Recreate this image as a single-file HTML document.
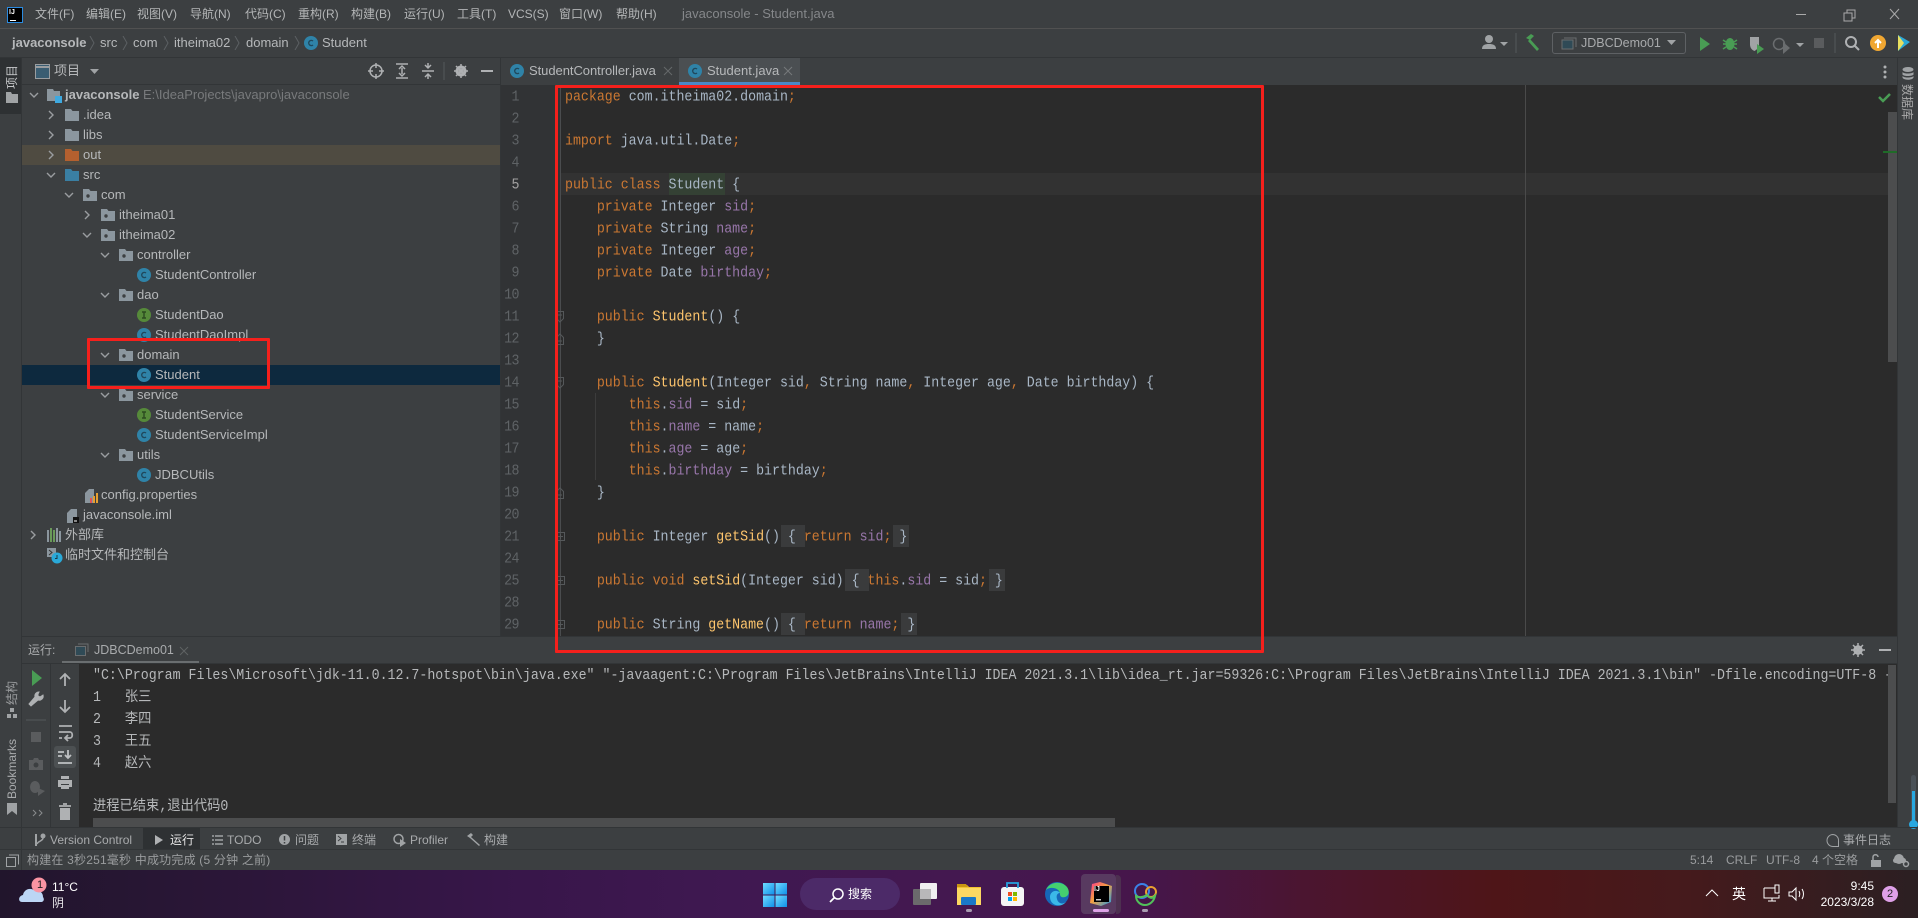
<!DOCTYPE html>
<html lang="zh"><head><meta charset="utf-8"><title>javaconsole - Student.java</title>
<style>
*{box-sizing:border-box}
html,body{margin:0;padding:0;width:1918px;height:918px;overflow:hidden;background:#3c3f41}
body{position:relative;font-family:"Liberation Sans","Noto Sans CJK SC",sans-serif;font-size:13px;color:#b6b8ba}
.a{position:absolute;white-space:nowrap}
.b{position:absolute}
.t{position:absolute;white-space:nowrap;line-height:20px;height:20px}
.i{position:absolute;overflow:visible}
.m{font-size:12px;line-height:16px;top:6px;color:#b4b6b7;position:absolute;white-space:nowrap}
.c{position:absolute;left:565px;height:22px;line-height:22px;font-family:"Liberation Mono","Noto Sans CJK SC",monospace;font-size:13.28px;color:#a9b7c6;white-space:pre;transform:scaleY(1.1)}
.n{position:absolute;left:500px;width:19px;text-align:right;height:22px;line-height:22px;font-family:"Liberation Mono",monospace;font-size:13.28px;color:#5f6366;letter-spacing:-.5px;transform:scaleY(1.1)}
.k{color:#cc7832}.f{color:#9876aa}.h{color:#ffc66d}
.g{position:absolute;height:22px;background:#3a3b3c}
.o{position:absolute;left:93px;height:22px;line-height:22px;font-family:"Liberation Mono","Noto Sans CJK SC",monospace;font-size:13.28px;color:#b6b8ba;white-space:pre;transform:scaleY(1.08)}
.v{position:absolute;writing-mode:vertical-rl;text-orientation:sideways;white-space:nowrap;font-size:12px;line-height:14px;color:#aaa}
.r{transform:rotate(180deg)}
.s{position:absolute;top:830px;line-height:20px;font-size:12px;color:#a9abad;white-space:nowrap}
.st{position:absolute;top:851px;line-height:18px;font-size:12px;color:#9a9c9e;white-space:nowrap}
</style></head><body>
<svg width="0" height="0" style="position:absolute">
<defs>
<symbol id="fo" viewBox="0 0 14 14"><path d="M0 1h6l1.5 2H14v10H0z" fill="#8b969e"/></symbol>
<symbol id="fp" viewBox="0 0 14 14"><path d="M0 1h6l1.5 2H14v10H0z" fill="#8b969e"/><circle cx="5" cy="8" r="1.7" fill="#3c3f41"/></symbol>
<symbol id="fr" viewBox="0 0 14 14"><path d="M0 1h6l1.5 2H14v10H0z" fill="#b4602f"/></symbol>
<symbol id="fs" viewBox="0 0 14 14"><path d="M0 1h6l1.5 2H14v10H0z" fill="#3a7fa3"/></symbol>
<symbol id="cc" viewBox="0 0 14 14"><circle cx="7" cy="7" r="7" fill="#2f83a8"/><path d="M9 5a2.6 2.6 0 1 0 0 4" fill="none" stroke="#20485c" stroke-width="1.4"/></symbol>
<symbol id="ci" viewBox="0 0 14 14"><circle cx="7" cy="7" r="7" fill="#568a3a"/><path d="M5 4h4M7 4v6M5 10h4" fill="none" stroke="#2c4a20" stroke-width="1.4"/></symbol>
<symbol id="dv" viewBox="0 0 10 10"><path d="M1 3l4 4 4-4" fill="none" stroke="#9a9da0" stroke-width="1.4"/></symbol>
<symbol id="dr" viewBox="0 0 10 10"><path d="M3 1l4 4-4 4" fill="none" stroke="#9a9da0" stroke-width="1.4"/></symbol>
<symbol id="ch" viewBox="0 0 6 14"><path d="M1 0l4 7-4 7" fill="none" stroke="#5c6063" stroke-width="1"/></symbol>
<symbol id="fm" viewBox="0 0 8 12"><path d="M.5.5h7v7L4 11 .5 7.500z" fill="none" stroke="#55585a"/><path d="M2 4h4" stroke="#55585a"/></symbol>
<symbol id="fu" viewBox="0 0 8 12"><path d="M.5 11.500h7v-7L4 1 .5 4.500z" fill="none" stroke="#55585a"/><path d="M2 8h4" stroke="#55585a"/></symbol>
<symbol id="fc" viewBox="0 0 9 9"><path d="M.5.5h8v8h-8z" fill="none" stroke="#55585a"/><path d="M2 4.500h5M4.500 2v5" stroke="#55585a"/></symbol>
</defs></svg>

<!-- title bar -->
<div class="b" style="left:0;top:28px;width:1918px;height:1px;background:#515151"></div>
<div class="b" style="left:7px;top:7px;width:16px;height:16px;background:#000;border:1px solid #2b8be0"></div>
<div class="a" style="left:9px;top:8px;font:bold 7px/9px 'Liberation Sans';color:#fff">IJ</div>
<div class="b" style="left:10px;top:20px;width:6px;height:1px;background:#fff"></div>
<span class="m" style="left:35px">文件(F)</span><span class="m" style="left:86px">编辑(E)</span><span class="m" style="left:137px">视图(V)</span><span class="m" style="left:190px">导航(N)</span><span class="m" style="left:245px">代码(C)</span><span class="m" style="left:298px">重构(R)</span><span class="m" style="left:351px">构建(B)</span><span class="m" style="left:404px">运行(U)</span><span class="m" style="left:457px">工具(T)</span><span class="m" style="left:508px">VCS(S)</span><span class="m" style="left:559px">窗口(W)</span><span class="m" style="left:616px">帮助(H)</span>
<span class="m" style="left:682px;font-size:13px;color:#85878a">javaconsole - Student.java</span>
<svg class="i" style="left:1790px;top:6px" width="115" height="18"><path d="M6 8.500h10" stroke="#aaa"/><path d="M54 7h8v8h-8zM57 7V4h8v8h-3" fill="none" stroke="#aaa"/><path d="M100 3l9 10M109 3l-9 10" stroke="#aaa"/></svg>

<!-- breadcrumbs -->
<div class="b" style="left:0;top:57px;width:1918px;height:1px;background:#323537"></div>
<div class="t" style="left:12px;top:33px;font-weight:bold">javaconsole</div>
<svg class="i" style="left:89px;top:36px" width="6" height="14"><use href="#ch"/></svg>
<div class="t" style="left:100px;top:33px">src</div>
<svg class="i" style="left:122px;top:36px" width="6" height="14"><use href="#ch"/></svg>
<div class="t" style="left:133px;top:33px">com</div>
<svg class="i" style="left:163px;top:36px" width="6" height="14"><use href="#ch"/></svg>
<div class="t" style="left:174px;top:33px">itheima02</div>
<svg class="i" style="left:234px;top:36px" width="6" height="14"><use href="#ch"/></svg>
<div class="t" style="left:246px;top:33px">domain</div>
<svg class="i" style="left:294px;top:36px" width="6" height="14"><use href="#ch"/></svg>
<svg class="i" style="left:304px;top:36px" width="14" height="14"><use href="#cc"/></svg>
<div class="t" style="left:322px;top:33px">Student</div>

<!-- main toolbar right -->
<svg class="i" style="left:1480px;top:33px" width="440" height="24">
<circle cx="9" cy="6" r="4" fill="#a0a3a5"/><path d="M2 16c0-4 3-5 7-5s7 1 7 5z" fill="#a0a3a5"/><path d="M20 9h8l-4 4z" fill="#a0a3a5"/>
<path d="M36 0v20" stroke="#55585a"/>
<path d="M46 5l5-4 3 2-4 4zM50 6l9 10-2 2-9-10z" fill="#499c54"/>
<path d="M220 4l10 7-10 7z" fill="#499c54"/>
<ellipse cx="250" cy="11" rx="4.500" ry="6" fill="#499c54"/><path d="M243 7l3 2M257 7l-3 2M243 11h3M254 11h3M243 16l3-2M257 16l-3-2" stroke="#499c54" stroke-width="1.500"/>
<path d="M270 4h9v8c-1 4-3 5-4.500 6-2-1-4-2-4.500-6z" fill="#a0a3a5"/><path d="M277 11l7 5-7 5z" fill="#499c54"/>
<circle cx="299" cy="11" r="5.500" fill="none" stroke="#6a6d6f" stroke-width="1.500"/><path d="M303 9l7 6-7 6z" fill="#6a6d6f"/>
<path d="M316 10h8l-4 4z" fill="#a0a3a5"/>
<rect x="334" y="5" width="10" height="10" fill="#5a5c5e"/>
<path d="M355 0v20" stroke="#55585a"/>
<circle cx="371" cy="9" r="5" fill="none" stroke="#afb1b3" stroke-width="2"/><path d="M375 13l4 4" stroke="#afb1b3" stroke-width="2"/>
<circle cx="398" cy="10" r="8" fill="#f0a732"/><path d="M398 15V7M395 10l3-3 3 3" stroke="#fff" stroke-width="2" fill="none"/>
<path d="M418 2l12 7-12 9z" fill="#2aa9d8"/><path d="M418 2l6 8-6 8z" fill="#e8e060"/>
</svg>
<div class="b" style="left:1552px;top:32px;width:134px;height:22px;border:1px solid #5e6164;border-radius:3px"></div>
<svg class="i" style="left:1561px;top:36px" width="16" height="14"><path d="M1 4h11v9H1z" fill="#2f4a56" stroke="#6a6d6f"/><path d="M3 2h12v9" fill="none" stroke="#6a6d6f"/></svg>
<div class="t" style="left:1581px;top:33px;font-size:12.500px;color:#a8aaac">JDBCDemo01</div>
<svg class="i" style="left:1667px;top:39px" width="10" height="8"><path d="M0 1h9L4.500 6z" fill="#a0a3a5"/></svg>

<!-- left stripe -->
<div class="b" style="left:0;top:58px;width:21px;height:56px;background:#2e3133"></div>
<div class="b" style="left:21px;top:58px;width:1px;height:812px;background:#323537"></div>
<div class="v r" style="left:5px;top:65px;color:#c4c6c8;font-size:12px">项目</div>
<svg class="i" style="left:6px;top:92px" width="12" height="11"><path d="M0 0h5l1 2h6v9H0z" fill="#a0a3a5"/></svg>

<!-- project header -->
<div class="b" style="left:22px;top:84px;width:478px;height:1px;background:#323537"></div>
<svg class="i" style="left:35px;top:64px" width="15" height="15"><rect x=".5" y=".5" width="14" height="14" fill="#3a5d72" stroke="#9a9da0"/><path d="M1 3h13" stroke="#9a9da0" stroke-width="2"/></svg>
<div class="t" style="left:54px;top:61px">项目</div>
<svg class="i" style="left:90px;top:68px" width="10" height="8"><path d="M0 1h9L4.500 6z" fill="#a0a3a5"/></svg>
<svg class="i" style="left:368px;top:62px" width="130" height="18">
<circle cx="8" cy="9" r="6" fill="none" stroke="#afb1b3" stroke-width="1.500"/><path d="M8 1v5M8 12v5M0 9h5M11 9h5" stroke="#afb1b3" stroke-width="1.500"/>
<path d="M28 2h12M28 16h12M34 6v6M31 7l3-3 3 3M31 11l3 3 3-3" stroke="#afb1b3" fill="none" stroke-width="1.500"/>
<path d="M54 9h12M60 1v5M60 17v-5M57 3l3 3 3-3M57 15l3-3 3 3" stroke="#afb1b3" fill="none" stroke-width="1.500"/>
<path d="M76 0v18" stroke="#55585a"/>
<circle cx="93" cy="9" r="4" fill="none" stroke="#afb1b3" stroke-width="3"/><path d="M93 2v14M86 9h14M88 4l10 10M98 4L88 14" stroke="#afb1b3" stroke-width="1.500"/>
<path d="M113 9h12" stroke="#afb1b3" stroke-width="2"/>
</svg>

<!-- tree panel highlights -->
<div class="b" style="left:22px;top:145px;width:478px;height:20px;background:#4f4b41"></div>
<div class="b" style="left:22px;top:365px;width:478px;height:20px;background:#0d293e"></div>

<!-- tree -->
<svg class="i" style="left:29px;top:90px" width="10" height="10"><use href="#dv"/></svg>
<svg class="i" style="left:47px;top:88px" width="16" height="16"><path d="M0 1h6l1 2h6v10H0z" fill="#8b969e"/><rect x="8" y="8" width="7" height="7" fill="#3ea9e0"/></svg>
<div class="t" style="left:65px;top:85px;font-weight:bold">javaconsole</div>
<div class="t" style="left:143px;top:85px;color:#787a7c">E:\IdeaProjects\javapro\javaconsole</div>

<svg class="i" style="left:46px;top:110px" width="10" height="10"><use href="#dr"/></svg><svg class="i" style="left:65px;top:108px" width="14" height="14"><use href="#fo"/></svg><div class="t" style="left:83px;top:105px">.idea</div>
<svg class="i" style="left:46px;top:130px" width="10" height="10"><use href="#dr"/></svg><svg class="i" style="left:65px;top:128px" width="14" height="14"><use href="#fo"/></svg><div class="t" style="left:83px;top:125px">libs</div>
<svg class="i" style="left:46px;top:150px" width="10" height="10"><use href="#dr"/></svg><svg class="i" style="left:65px;top:148px" width="14" height="14"><use href="#fr"/></svg><div class="t" style="left:83px;top:145px">out</div>
<svg class="i" style="left:46px;top:170px" width="10" height="10"><use href="#dv"/></svg><svg class="i" style="left:65px;top:168px" width="14" height="14"><use href="#fs"/></svg><div class="t" style="left:83px;top:165px">src</div>
<svg class="i" style="left:64px;top:190px" width="10" height="10"><use href="#dv"/></svg><svg class="i" style="left:83px;top:188px" width="14" height="14"><use href="#fp"/></svg><div class="t" style="left:101px;top:185px">com</div>
<svg class="i" style="left:82px;top:210px" width="10" height="10"><use href="#dr"/></svg><svg class="i" style="left:101px;top:208px" width="14" height="14"><use href="#fp"/></svg><div class="t" style="left:119px;top:205px">itheima01</div>
<svg class="i" style="left:82px;top:230px" width="10" height="10"><use href="#dv"/></svg><svg class="i" style="left:101px;top:228px" width="14" height="14"><use href="#fp"/></svg><div class="t" style="left:119px;top:225px">itheima02</div>
<svg class="i" style="left:100px;top:250px" width="10" height="10"><use href="#dv"/></svg><svg class="i" style="left:119px;top:248px" width="14" height="14"><use href="#fp"/></svg><div class="t" style="left:137px;top:245px">controller</div>
<svg class="i" style="left:137px;top:268px" width="14" height="14"><use href="#cc"/></svg><div class="t" style="left:155px;top:265px">StudentController</div>
<svg class="i" style="left:100px;top:290px" width="10" height="10"><use href="#dv"/></svg><svg class="i" style="left:119px;top:288px" width="14" height="14"><use href="#fp"/></svg><div class="t" style="left:137px;top:285px">dao</div>
<svg class="i" style="left:137px;top:308px" width="14" height="14"><use href="#ci"/></svg><div class="t" style="left:155px;top:305px">StudentDao</div>
<svg class="i" style="left:137px;top:328px" width="14" height="14"><use href="#cc"/></svg><div class="t" style="left:155px;top:325px">StudentDaoImpl</div>
<svg class="i" style="left:100px;top:350px" width="10" height="10"><use href="#dv"/></svg><svg class="i" style="left:119px;top:348px" width="14" height="14"><use href="#fp"/></svg><div class="t" style="left:137px;top:345px">domain</div>
<svg class="i" style="left:137px;top:368px" width="14" height="14"><use href="#cc"/></svg><div class="t" style="left:155px;top:365px">Student</div>
<svg class="i" style="left:100px;top:390px" width="10" height="10"><use href="#dv"/></svg><svg class="i" style="left:119px;top:388px" width="14" height="14"><use href="#fp"/></svg><div class="t" style="left:137px;top:385px">service</div>
<svg class="i" style="left:137px;top:408px" width="14" height="14"><use href="#ci"/></svg><div class="t" style="left:155px;top:405px">StudentService</div>
<svg class="i" style="left:137px;top:428px" width="14" height="14"><use href="#cc"/></svg><div class="t" style="left:155px;top:425px">StudentServiceImpl</div>
<svg class="i" style="left:100px;top:450px" width="10" height="10"><use href="#dv"/></svg><svg class="i" style="left:119px;top:448px" width="14" height="14"><use href="#fp"/></svg><div class="t" style="left:137px;top:445px">utils</div>
<svg class="i" style="left:137px;top:468px" width="14" height="14"><use href="#cc"/></svg><div class="t" style="left:155px;top:465px">JDBCUtils</div>
<svg class="i" style="left:85px;top:488px" width="14" height="15"><path d="M0 5l4-4h5v14H0z" fill="#8b969e"/><rect x="5" y="10" width="2" height="5" fill="#e05555"/><rect x="8" y="8" width="2" height="7" fill="#e8a030"/><rect x="11" y="5" width="2" height="10" fill="#e8a030"/></svg><div class="t" style="left:101px;top:485px">config.properties</div>
<svg class="i" style="left:67px;top:508px" width="14" height="15"><path d="M0 5l4-4h6v14H0z" fill="#8b969e"/><rect x="6" y="9" width="6" height="6" fill="#111"/><path d="M7 13h3" stroke="#fff"/></svg><div class="t" style="left:83px;top:505px">javaconsole.iml</div>
<svg class="i" style="left:28px;top:530px" width="10" height="10"><use href="#dr"/></svg>
<svg class="i" style="left:47px;top:528px" width="14" height="14"><rect x="0" y="2" width="2" height="12" fill="#8b969e"/><rect x="3" y="0" width="2" height="14" fill="#6a9a5a"/><rect x="6" y="2" width="2" height="12" fill="#6a9a5a"/><rect x="9" y="0" width="2" height="14" fill="#8b969e"/><rect x="12" y="3" width="2" height="11" fill="#8b969e"/></svg>
<div class="t" style="left:65px;top:525px">外部库</div>
<svg class="i" style="left:47px;top:548px" width="16" height="16"><path d="M0 0h9v9H0z" fill="#8b969e"/><path d="M2 2l3 2.500L2 7" stroke="#333" fill="none"/><circle cx="10" cy="10" r="5.500" fill="#2aa9d8"/><path d="M10 7v3.500h-2" stroke="#1a3a4a" fill="none"/></svg>
<div class="t" style="left:65px;top:545px">临时文件和控制台</div>

<!-- tabs -->
<div class="b" style="left:500px;top:57px;width:1px;height:580px;background:#323537"></div>
<div class="b" style="left:679px;top:58px;width:121px;height:24px;background:#4b4f52"></div>
<div class="b" style="left:679px;top:82px;width:121px;height:3px;background:#4a88c7"></div>
<svg class="i" style="left:510px;top:64px" width="14" height="14"><use href="#cc"/></svg>
<div class="t" style="left:529px;top:61px;letter-spacing:-.05px">StudentController.java</div>
<svg class="i" style="left:664px;top:67px" width="8" height="8"><path d="M0 0l8 8M8 0L0 8" stroke="#65686a"/></svg>
<svg class="i" style="left:688px;top:64px" width="14" height="14"><use href="#cc"/></svg>
<div class="t" style="left:707px;top:61px">Student.java</div>
<svg class="i" style="left:784px;top:67px" width="8" height="8"><path d="M0 0l8 8M8 0L0 8" stroke="#76797b"/></svg>
<svg class="i" style="left:1883px;top:65px" width="4" height="14"><circle cx="2" cy="2" r="1.500" fill="#afb1b3"/><circle cx="2" cy="7" r="1.500" fill="#afb1b3"/><circle cx="2" cy="12" r="1.500" fill="#afb1b3"/></svg>

<!-- editor -->
<div class="b" style="left:501px;top:85px;width:59px;height:551px;background:#313335"></div>
<div class="b" style="left:560px;top:85px;width:1337px;height:551px;background:#2b2b2b"></div>
<div class="b" style="left:560px;top:173px;width:1337px;height:22px;background:#323232"></div>
<div class="b" style="left:560px;top:85px;width:1px;height:551px;background:#4a4c4e"></div>
<div class="b" style="left:1525px;top:85px;width:1px;height:551px;background:#4a4a4a"></div>
<div class="b" style="left:595px;top:393px;width:1px;height:87px;background:#3c3c3c"></div>
<div class="b" style="left:669px;top:173px;width:56px;height:22px;background:#344134"></div>
<div class="g" style="left:781px;top:525px;width:24px"></div><div class="g" style="left:893px;top:525px;width:16px"></div>
<div class="g" style="left:845px;top:569px;width:24px"></div><div class="g" style="left:989px;top:569px;width:16px"></div>
<div class="g" style="left:781px;top:613px;width:24px"></div><div class="g" style="left:901px;top:613px;width:16px"></div>
<div class="b" style="left:1888px;top:112px;width:9px;height:250px;background:#4c4d4e"></div>
<div class="b" style="left:1883px;top:151px;width:14px;height:2px;background:#1f6b28"></div>
<svg class="i" style="left:1878px;top:92px" width="13" height="11"><path d="M1 5l4 4 7-7" fill="none" stroke="#499c54" stroke-width="2.500"/></svg>

<div class="n" style="top:86px">1</div><div class="n" style="top:108px">2</div><div class="n" style="top:130px">3</div><div class="n" style="top:152px">4</div><div class="n" style="top:174px;color:#a4a3a3">5</div><div class="n" style="top:196px">6</div><div class="n" style="top:218px">7</div><div class="n" style="top:240px">8</div><div class="n" style="top:262px">9</div><div class="n" style="top:284px">10</div><div class="n" style="top:306px">11</div><div class="n" style="top:328px">12</div><div class="n" style="top:350px">13</div><div class="n" style="top:372px">14</div><div class="n" style="top:394px">15</div><div class="n" style="top:416px">16</div><div class="n" style="top:438px">17</div><div class="n" style="top:460px">18</div><div class="n" style="top:482px">19</div><div class="n" style="top:504px">20</div><div class="n" style="top:526px">21</div><div class="n" style="top:548px">24</div><div class="n" style="top:570px">25</div><div class="n" style="top:592px">28</div><div class="n" style="top:614px">29</div>

<svg class="i" style="left:556px;top:311px" width="8" height="12"><use href="#fm"/></svg>
<svg class="i" style="left:556px;top:333px" width="8" height="12"><use href="#fu"/></svg>
<svg class="i" style="left:556px;top:377px" width="8" height="12"><use href="#fm"/></svg>
<svg class="i" style="left:556px;top:487px" width="8" height="12"><use href="#fu"/></svg>
<svg class="i" style="left:556px;top:532px" width="9" height="9"><use href="#fc"/></svg>
<svg class="i" style="left:556px;top:576px" width="9" height="9"><use href="#fc"/></svg>
<svg class="i" style="left:556px;top:620px" width="9" height="9"><use href="#fc"/></svg>

<div class="c" style="top:86px"><span class="k">package</span> com.itheima02.domain<span class="k">;</span></div>
<div class="c" style="top:130px"><span class="k">import</span> java.util.Date<span class="k">;</span></div>
<div class="c" style="top:174px"><span class="k">public class</span> Student {</div>
<div class="c" style="top:196px">    <span class="k">private</span> Integer <span class="f">sid</span><span class="k">;</span></div>
<div class="c" style="top:218px">    <span class="k">private</span> String <span class="f">name</span><span class="k">;</span></div>
<div class="c" style="top:240px">    <span class="k">private</span> Integer <span class="f">age</span><span class="k">;</span></div>
<div class="c" style="top:262px">    <span class="k">private</span> Date <span class="f">birthday</span><span class="k">;</span></div>
<div class="c" style="top:306px">    <span class="k">public</span> <span class="h">Student</span>() {</div>
<div class="c" style="top:328px">    }</div>
<div class="c" style="top:372px">    <span class="k">public</span> <span class="h">Student</span>(Integer sid<span class="k">,</span> String name<span class="k">,</span> Integer age<span class="k">,</span> Date birthday) {</div>
<div class="c" style="top:394px">        <span class="k">this</span>.<span class="f">sid</span> = sid<span class="k">;</span></div>
<div class="c" style="top:416px">        <span class="k">this</span>.<span class="f">name</span> = name<span class="k">;</span></div>
<div class="c" style="top:438px">        <span class="k">this</span>.<span class="f">age</span> = age<span class="k">;</span></div>
<div class="c" style="top:460px">        <span class="k">this</span>.<span class="f">birthday</span> = birthday<span class="k">;</span></div>
<div class="c" style="top:482px">    }</div>
<div class="c" style="top:526px">    <span class="k">public</span> Integer <span class="h">getSid</span>() { <span class="k">return</span> <span class="f">sid</span><span class="k">;</span> }</div>
<div class="c" style="top:570px">    <span class="k">public void</span> <span class="h">setSid</span>(Integer sid) { <span class="k">this</span>.<span class="f">sid</span> = sid<span class="k">;</span> }</div>
<div class="c" style="top:614px">    <span class="k">public</span> String <span class="h">getName</span>() { <span class="k">return</span> <span class="f">name</span><span class="k">;</span> }</div>

<!-- right stripe -->
<div class="b" style="left:1897px;top:58px;width:1px;height:770px;background:#323537"></div>
<svg class="i" style="left:1902px;top:67px" width="12" height="13"><ellipse cx="6" cy="2.500" rx="5.500" ry="2.500" fill="#a0a3a5"/><path d="M.5 5c1 2 10 2 11 0v2.500c-1 2-10 2-11 0zM.5 9c1 2 10 2 11 0v1.500c-1 3-10 3-11 0z" fill="#a0a3a5"/></svg>
<div class="v" style="left:1900px;top:84px">数据库</div>

<!-- run panel -->
<div class="b" style="left:22px;top:636px;width:1875px;height:1px;background:#323537"></div>
<div class="t" style="left:28px;top:640px;font-size:12px;color:#a9abad">运行:</div>
<svg class="i" style="left:75px;top:643px" width="14" height="13"><path d="M.5 3.500h10v9H.5z" fill="#2f4a56" stroke="#6a6d6f"/><path d="M3 1h10v8" fill="none" stroke="#6a6d6f"/></svg>
<div class="t" style="left:94px;top:640px;font-size:12.500px;color:#a9abad">JDBCDemo01</div>
<svg class="i" style="left:180px;top:647px" width="8" height="8"><path d="M0 0l8 8M8 0L0 8" stroke="#5f6264"/></svg>
<div class="b" style="left:62px;top:661px;width:137px;height:3px;background:#6a6e70"></div>
<div class="b" style="left:22px;top:663px;width:1875px;height:1px;background:#323537"></div>
<svg class="i" style="left:1851px;top:643px" width="40" height="14"><circle cx="7" cy="7" r="3.500" fill="none" stroke="#afb1b3" stroke-width="2.500"/><path d="M7 0v14M0 7h14M2 2l10 10M12 2L2 12" stroke="#afb1b3" stroke-width="1.500"/><path d="M28 7h12" stroke="#afb1b3" stroke-width="2"/></svg>

<div class="b" style="left:50px;top:664px;width:1px;height:163px;background:#323537"></div>
<div class="b" style="left:79px;top:664px;width:1818px;height:163px;background:#2b2b2b"></div>

<div class="a" style="left:79px;top:664px;width:1809px;height:163px;overflow:hidden">
<div class="o" style="left:14px;top:1px">"C:\Program Files\Microsoft\jdk-11.0.12.7-hotspot\bin\java.exe" "-javaagent:C:\Program Files\JetBrains\IntelliJ IDEA 2021.3.1\lib\idea_rt.jar=59326:C:\Program Files\JetBrains\IntelliJ IDEA 2021.3.1\bin" -Dfile.encoding=UTF-8 -classpath</div>
<div class="o" style="left:14px;top:23px">1   张三</div>
<div class="o" style="left:14px;top:45px">2   李四</div>
<div class="o" style="left:14px;top:67px">3   王五</div>
<div class="o" style="left:14px;top:89px">4   赵六</div>
<div class="o" style="left:14px;top:132px">进程已结束,退出代码0</div>
<div class="b" style="left:14px;top:154px;width:1022px;height:9px;background:#4c4d4e"></div>
</div>
<div class="b" style="left:1888px;top:665px;width:8px;height:138px;background:#4c4d4e"></div>

<!-- run toolbar icons -->
<svg class="i" style="left:26px;top:670px" width="54" height="156">
<path d="M6 0l10 8-10 8z" fill="#499c54"/>
<path d="M5 34l7-7M13 22a4 4 0 0 0-4 5l-6 7 2 2 7-6a4 4 0 0 0 5-5l-3 2-2-1v-2z" fill="#afb1b3" stroke="#afb1b3"/>
<path d="M0 50h20" stroke="#55585a"/>
<rect x="5" y="62" width="10" height="10" fill="#5a5c5e"/>
<path d="M3 90h14v10H3z" fill="#5a5c5e"/><path d="M7 90l1-2h4l1 2z" fill="#5a5c5e"/><circle cx="10" cy="95" r="2.500" fill="#3c3f41"/>
<ellipse cx="9" cy="117" rx="5" ry="6" fill="#5a5c5e"/><path d="M12 118l7 3-7 5z" fill="#5a5c5e"/>
<path d="M7 140l3 3-3 3M13 140l3 3-3 3" fill="none" stroke="#8a8c8e"/>
<path d="M39 4v12M34 9l5-5 5 5" fill="none" stroke="#afb1b3" stroke-width="1.800"/>
<path d="M39 30v12M34 37l5 5 5-5" fill="none" stroke="#afb1b3" stroke-width="1.800"/>
<path d="M33 56h13M33 62h11c3 0 3 6 0 6h-4M42 65l-3 3 3 3M33 68h3" fill="none" stroke="#afb1b3" stroke-width="1.800"/>
</svg>
<div class="b" style="left:54px;top:746px;width:22px;height:22px;background:#4c5052;border-radius:3px"></div>
<svg class="i" style="left:58px;top:750px" width="14" height="14"><path d="M0 2h6M0 6h4M0 13h14M10 0v8M7 5l3 3 3-3" fill="none" stroke="#bfc1c3" stroke-width="1.800"/></svg>
<svg class="i" style="left:58px;top:776px" width="14" height="46"><path d="M3 0h8v3H3zM0 4h14v7h-3V8H3v3H0zM3 9h8v4H3z" fill="#afb1b3"/><path d="M1 30h12M5 28h4" stroke="#afb1b3" stroke-width="1.800"/><path d="M2 32h10v12H2z" fill="#afb1b3"/></svg>

<div class="v r" style="left:5px;top:681px;color:#9a9c9e">结构</div>
<svg class="i" style="left:7px;top:708px" width="10" height="11"><rect x="3" y="0" width="4" height="4" fill="#a0a3a5"/><rect x="0" y="6" width="4" height="4" fill="#a0a3a5"/><rect x="6" y="6" width="4" height="4" fill="#a0a3a5"/></svg>
<div class="v r" style="left:5px;top:739px;color:#a9abad">Bookmarks</div>
<svg class="i" style="left:7px;top:803px" width="10" height="12"><path d="M0 0h10v12L5 8l-5 4z" fill="#a0a3a5"/></svg>

<!-- volume slider -->
<div class="b" style="left:1911px;top:775px;width:5px;height:50px;background:#4a5157;border-radius:3px"></div>
<div class="b" style="left:1912px;top:791px;width:3px;height:34px;background:#29a8e0"></div>
<div class="b" style="left:1909px;top:820px;width:9px;height:9px;border-radius:50%;background:#29a8e0"></div>

<!-- bottom tool bar -->
<div class="b" style="left:0;top:827px;width:1918px;height:1px;background:#323537"></div>
<div class="b" style="left:143px;top:828px;width:57px;height:21px;background:#2e3133"></div>
<div class="b" style="left:0;top:849px;width:1918px;height:1px;background:#323537"></div>
<svg class="i" style="left:34px;top:833px" width="14" height="14"><path d="M2 1v12" stroke="#a0a3a5" stroke-width="2"/><circle cx="9" cy="3" r="2.500" fill="#a0a3a5"/><path d="M9 5c0 3-5 3-6 6" fill="none" stroke="#a0a3a5" stroke-width="1.500"/></svg>
<span class="s" style="left:50px">Version Control</span>
<svg class="i" style="left:155px;top:834px" width="9" height="12"><path d="M0 1l8 5-8 5z" fill="#afb1b3"/></svg>
<span class="s" style="left:170px;color:#e4e4e4">运行</span>
<svg class="i" style="left:212px;top:835px" width="11" height="10"><path d="M0 1h2M0 5h2M0 9h2M3 1h8M3 5h8M3 9h8" stroke="#a0a3a5" stroke-width="1.500"/></svg>
<span class="s" style="left:227px">TODO</span>
<svg class="i" style="left:279px;top:834px" width="11" height="11"><circle cx="5.500" cy="5.500" r="5.500" fill="#a0a3a5"/><path d="M5.500 2v4.500M5.500 8v1.500" stroke="#3c3f41" stroke-width="1.500"/></svg>
<span class="s" style="left:295px">问题</span>
<svg class="i" style="left:336px;top:834px" width="11" height="11"><rect width="11" height="11" fill="#a0a3a5"/><path d="M2 2l3 2.500L2 7M5 8h3" fill="none" stroke="#3c3f41"/></svg>
<span class="s" style="left:352px">终端</span>
<svg class="i" style="left:393px;top:833px" width="13" height="14"><circle cx="5.500" cy="6" r="4.500" fill="none" stroke="#a0a3a5" stroke-width="1.500"/><path d="M7 6l6 4-6 4z" fill="#a0a3a5"/></svg>
<span class="s" style="left:410px">Profiler</span>
<svg class="i" style="left:467px;top:833px" width="13" height="13"><path d="M0 3l4-3 2 2-3 3zM4 4l9 8-1 1-9-8z" fill="#a0a3a5"/></svg>
<span class="s" style="left:484px">构建</span>
<svg class="i" style="left:1826px;top:834px" width="13" height="13"><path d="M7 .5a6 6 0 1 0 0 12h5.500V7A6 6 0 0 0 7 .5z" fill="none" stroke="#a0a3a5"/></svg>
<span class="s" style="left:1843px">事件日志</span>

<!-- status bar -->
<svg class="i" style="left:6px;top:854px" width="13" height="13"><path d="M.5 3.500h9v9h-9z" fill="none" stroke="#a0a3a5"/><path d="M3 1h9.500v9.500" fill="none" stroke="#a0a3a5"/></svg>
<span class="st" style="left:27px;letter-spacing:.2px">构建在 3秒251毫秒 中成功完成 (5 分钟 之前)</span>
<span class="st" style="left:1690px">5:14</span>
<span class="st" style="left:1726px">CRLF</span>
<span class="st" style="left:1766px">UTF-8</span>
<span class="st" style="left:1812px">4 个空格</span>
<svg class="i" style="left:1870px;top:853px" width="42" height="15"><path d="M1 7h10v7H1z" fill="#a0a3a5"/><path d="M3 7V4c0-3 5-3 5 0" fill="none" stroke="#a0a3a5" stroke-width="1.500"/><circle cx="29" cy="6" r="5" fill="#a0a3a5"/><rect x="23" y="5" width="13" height="5" rx="2.500" fill="#a0a3a5"/><circle cx="36" cy="11" r="2.500" fill="none" stroke="#a0a3a5" stroke-width="1.500"/></svg>

<!-- taskbar -->
<div class="b" style="left:0;top:870px;width:1918px;height:48px;background:linear-gradient(90deg,#21152c 0,#2b1638 12%,#371649 26%,#3f1851 38%,#441850 50%,#46164a 60%,#4b1530 68%,#4e1518 78%,#451a1c 88%,#2b1f22 100%)"></div>
<svg class="i" style="left:19px;top:878px" width="28" height="26"><path d="M3 24c-4 0-4-6 1-7 1-6 8-8 12-4 5-1 8 2 8 6 2 3 0 5-2 5z" fill="#bcd6f5"/><circle cx="20" cy="7" r="7.500" fill="#fa94a3"/></svg>
<div class="a" style="left:37px;top:879px;width:6px;font:11px/13px 'Liberation Sans';color:#222">1</div>
<div class="a" style="left:52px;top:879px;font-size:12px;line-height:16px;color:#fff">11°C</div>
<div class="a" style="left:52px;top:895px;font-size:12px;line-height:16px;color:#e8e6ea">阴</div>

<svg class="i" style="left:763px;top:883px" width="24" height="24"><defs><linearGradient id="w" x1="0" y1="0" x2="1" y2="1"><stop offset="0" stop-color="#6fdcff"/><stop offset="1" stop-color="#0f8fe8"/></linearGradient></defs><rect width="11.500" height="11.500" fill="url(#w)"/><rect x="12.500" width="11.500" height="11.500" fill="url(#w)"/><rect y="12.500" width="11.500" height="11.500" fill="url(#w)"/><rect x="12.500" y="12.500" width="11.500" height="11.500" fill="url(#w)"/></svg>
<div class="b" style="left:800px;top:878px;width:100px;height:32px;border-radius:16px;background:#4c2a68"></div>
<svg class="i" style="left:829px;top:888px" width="15" height="15"><circle cx="9" cy="6" r="5" fill="none" stroke="#fff" stroke-width="1.500"/><path d="M5.500 9.500L1 14" stroke="#fff" stroke-width="1.800"/></svg>
<div class="a" style="left:848px;top:886px;font-size:12px;line-height:16px;color:#fff">搜索</div>
<svg class="i" style="left:913px;top:883px" width="25" height="23"><rect x="7" y="0" width="17" height="16" rx="1" fill="#f0eff0"/><rect x="0" y="6" width="18" height="16" rx="1" fill="#6b6a6c"/><rect x="7" y="6" width="11" height="10" fill="#b8b7b9"/></svg>
<svg class="i" style="left:957px;top:883px" width="24" height="23"><path d="M0 2h10l2 2h12v18H0z" fill="#f2c230"/><path d="M0 1h9l2 3H0z" fill="#c99512"/><rect x="0" y="5" width="24" height="17" fill="#fcd862"/><rect x="4" y="14" width="15" height="8" rx="1" fill="#1a78c8"/></svg>
<svg class="i" style="left:1001px;top:882px" width="24" height="24"><rect y="5" width="23" height="19" rx="3" fill="#f5f5f5"/><path d="M6 6V1h11v5" fill="none" stroke="#27a3e0" stroke-width="1.800"/><rect x="7" y="10" width="4" height="4" fill="#f25022"/><rect x="12" y="10" width="4" height="4" fill="#7fba00"/><rect x="7" y="15" width="4" height="4" fill="#00a4ef"/><rect x="12" y="15" width="4" height="4" fill="#ffb900"/></svg>
<svg class="i" style="left:1045px;top:882px" width="24" height="24"><circle cx="12" cy="12" r="12" fill="#1667b8"/><path d="M1 8C4 0 16-2 22 5c3 4 2 9-2 10-4 1-5-1-5-3 0-6-10-8-14-4z" fill="#45cf6f"/><path d="M5 15c0-6 7-8 10-4-3 0-4 3-3 6 1 4 5 6 9 3-5 6-16 4-16-5z" fill="#3bb8e8"/></svg>
<div class="b" style="left:1116px;top:875px;width:5px;height:39px;background:#4d3050;border-radius:0 4px 4px 0"></div>
<div class="b" style="left:1081px;top:874px;width:35px;height:40px;background:#583a60;border-radius:4px"></div>
<svg class="i" style="left:1089px;top:882px" width="24" height="24"><defs><linearGradient id="ij" x1="0" y1="0" x2="1" y2="1"><stop offset="0" stop-color="#ff3a8c"/><stop offset=".45" stop-color="#f5a040"/><stop offset="1" stop-color="#1c9be8"/></linearGradient></defs><path d="M3 2l8-2 12 4-1 16-10 4L1 21z" fill="url(#ij)"/><rect x="5" y="4" width="15" height="16" fill="#000"/><rect x="7" y="17" width="5" height="1.500" fill="#ccc"/></svg>
<div class="a" style="left:1094px;top:885px;font:bold 7px/9px 'Liberation Sans';color:#fff">IJ</div>
<svg class="i" style="left:1134px;top:882px" width="23" height="24"><circle cx="8" cy="9" r="7" fill="none" stroke="#3b82e8" stroke-width="2"/><circle cx="17" cy="10" r="5" fill="none" stroke="#e8a030" stroke-width="2"/><path d="M2 14c0 5 4 9 9 9s9-4 10-9c-3 3-6 2-8-1-3 2-8 3-11 1z" fill="none" stroke="#52c05a" stroke-width="2"/></svg>
<div class="b" style="left:966px;top:909px;width:6px;height:3px;border-radius:2px;background:#a89bb0"></div>
<div class="b" style="left:1093px;top:909px;width:16px;height:3px;border-radius:2px;background:#dfa3e8"></div>
<div class="b" style="left:1142px;top:909px;width:6px;height:3px;border-radius:2px;background:#a89bb0"></div>

<svg class="i" style="left:1706px;top:889px" width="12" height="8"><path d="M0 7l6-6 6 6" fill="none" stroke="#fff"/></svg>
<div class="a" style="left:1732px;top:886px;font-size:14px;line-height:16px;color:#fff">英</div>
<svg class="i" style="left:1763px;top:885px" width="42" height="18"><path d="M1 3h11M1 3v10h15v-3M5 16h8M9 13v3" fill="none" stroke="#fff"/><rect x="12" y="0" width="4" height="8" fill="none" stroke="#fff"/><path d="M26 7h3l4-4v12l-4-4h-3z" fill="none" stroke="#fff"/><path d="M36 6c1 2 1 4 0 6M39 4c2 3 2 7 0 10" fill="none" stroke="#fff"/></svg>
<div class="a" style="right:44px;top:878px;font-size:12px;line-height:16px;color:#fff">9:45</div>
<div class="a" style="right:44px;top:894px;font-size:12px;line-height:16px;color:#fff">2023/3/28</div>
<div class="b" style="left:1882px;top:886px;width:16px;height:16px;border-radius:50%;background:#dfa0e8;color:#222;font:11px/16px 'Liberation Sans';text-align:center">2</div>

<!-- red annotation boxes -->
<div class="b" style="left:87px;top:338px;width:183px;height:51px;border:3px solid #f5201c;border-radius:1px"></div>
<div class="b" style="left:555px;top:85px;width:709px;height:568px;border:3px solid #f5201c;border-radius:1px"></div>
</body></html>
